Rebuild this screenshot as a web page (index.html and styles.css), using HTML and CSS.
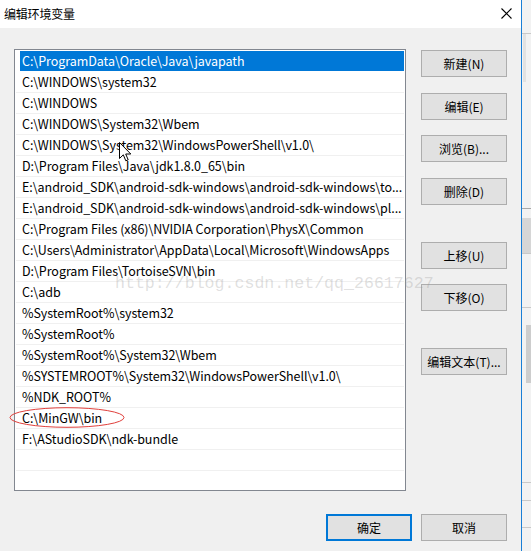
FILE: index.html
```html
<!DOCTYPE html>
<html lang="zh-CN">
<head>
<meta charset="utf-8">
<title>编辑环境变量</title>
<link rel="stylesheet" href="styles.css">
</head>
<body>
<div class="screen">
  <div class="dialog">
    <div class="titlebar">
      <span class="title">编辑环境变量</span>
      <svg class="close" width="11" height="11" viewBox="0 0 11 11"><path d="M0.5 0.5 L10.5 10.5 M10.5 0.5 L0.5 10.5" stroke="#000" stroke-width="1.1" fill="none"/></svg>
    </div>
    <div class="body">
      <div class="main">
        <div class="list">
          <div class="row selected"><span>C:\ProgramData\Oracle\Java\javapath</span></div>
          <div class="row"><span>C:\WINDOWS\system32</span></div>
          <div class="row"><span>C:\WINDOWS</span></div>
          <div class="row"><span>C:\WINDOWS\System32\Wbem</span></div>
          <div class="row"><span>C:\WINDOWS\System32\WindowsPowerShell\v1.0\</span></div>
          <div class="row"><span>D:\Program Files\Java\jdk1.8.0_65\bin</span></div>
          <div class="row"><span>E:\android_SDK\android-sdk-windows\android-sdk-windows\to...</span></div>
          <div class="row"><span>E:\android_SDK\android-sdk-windows\android-sdk-windows\pl...</span></div>
          <div class="row"><span>C:\Program Files (x86)\NVIDIA Corporation\PhysX\Common</span></div>
          <div class="row"><span>C:\Users\Administrator\AppData\Local\Microsoft\WindowsApps</span></div>
          <div class="row"><span>D:\Program Files\TortoiseSVN\bin</span></div>
          <div class="row"><span>C:\adb</span></div>
          <div class="row"><span>%SystemRoot%\system32</span></div>
          <div class="row"><span>%SystemRoot%</span></div>
          <div class="row"><span>%SystemRoot%\System32\Wbem</span></div>
          <div class="row"><span>%SYSTEMROOT%\System32\WindowsPowerShell\v1.0\</span></div>
          <div class="row"><span>%NDK_ROOT%</span></div>
          <div class="row"><span>C:\MinGW\bin</span></div>
          <div class="row"><span>F:\AStudioSDK\ndk-bundle</span></div>
          <div class="row"><span></span></div>
          <div class="row"><span></span></div>
        </div>
        <div class="buttons">
          <button class="btn first">新建(N)</button>
          <button class="btn wide">编辑(E)</button>
          <button class="btn">浏览(B)...</button>
          <button class="btn wide">删除(D)</button>
          <button class="btn group">上移(U)</button>
          <button class="btn">下移(O)</button>
          <button class="btn group">编辑文本(T)...</button>
        </div>
      </div>
      <div class="footer">
        <button class="btn default">确定</button>
        <button class="btn">取消</button>
      </div>
    </div>
    <div class="watermark">http://blog.csdn.net/qq_26617627</div>
    <svg class="ellipse" width="118" height="23" viewBox="0 0 118 23"><ellipse cx="59" cy="11.5" rx="57" ry="9.8" fill="none" stroke="#e0403c" stroke-width="1"/></svg>
    <svg class="cursor" width="13" height="21" viewBox="0 0 13 21"><path d="M0.5 0.5 L0.5 16.5 L4.3 12.8 L6.8 18.8 L9.2 17.8 L6.7 12 L11.8 12 Z" fill="#fff" stroke="#000" stroke-width="1" stroke-linejoin="miter"/></svg>
  </div>
  <div class="backdrop">
    <div class="bd-line l1"></div>
    <div class="bd-strip s1"></div>
    <div class="bd-line l2"></div>
    <div class="bd-block b1"></div>
    <div class="bd-line l3"></div>
    <div class="bd-line l4"></div>
    <div class="bd-thumb"></div>
    <div class="bd-line l5"></div>
    <div class="bd-line l6"></div>
    <div class="bd-line l7"></div>
  </div>
</div>
</body>
</html>
```
FILE: styles.css
```css
* { box-sizing: border-box; }
html, body { margin: 0; padding: 0; }
body {
  width: 531px;
  height: 551px;
  overflow: hidden;
  font-family: "Noto Sans CJK SC", "Noto Sans", sans-serif;
  background: #f0f0f0;
}
.screen {
  display: flex;
  height: 551px;
}
.dialog {
  position: relative;
  width: 522px;
  height: 551px;
  border-right: 1px solid #1a7fd6;
  background: #f0f0f0;
  display: flex;
  flex-direction: column;
}
.titlebar {
  height: 28px;
  background: #fff;
  display: flex;
  align-items: center;
  justify-content: space-between;
  padding: 0 9px 2px 4px;
}
.title {
  font-size: 12px;
  color: #000;
  letter-spacing: -0.2px;
}
.close { display: block; margin-top: 1px; }
.body {
  flex: 1;
  padding: 21px 14px 0 14px;
  display: flex;
  flex-direction: column;
}
.main {
  display: flex;
  gap: 15px;
}
.list {
  width: 392px;
  height: 442px;
  border: 1px solid #828790;
  background: #fff;
  padding: 1px 1px 0 1px;
  overflow: hidden;
}
.row {
  height: 21px;
  border-bottom: 1px solid #f0f0f0;
  padding-left: 6px;
  font-size: 12.5px;
  line-height: 20px;
  color: #000;
  white-space: nowrap;
  overflow: hidden;
  letter-spacing: -0.05px;
}
.row.selected {
  background: linear-gradient(to right, transparent 4px, #0078d7 4px);
  color: #fff;
  border-bottom-color: #fff;
}
.buttons {
  display: flex;
  flex-direction: column;
  gap: 15px;
  width: 86px;
}
.btn {
  width: 86px;
  height: 27px;
  background: #e1e1e1;
  border: 1px solid #adadad;
  padding: 0;
  font-family: "Noto Sans CJK SC", "Noto Sans", sans-serif;
  font-size: 12px;
  color: #000;
  line-height: 25px;
}
.btn.first { margin-top: 1px; }
.btn.wide { margin-top: 1px; }
.btn.group { margin-top: 22px; }
.footer {
  display: flex;
  justify-content: flex-end;
  gap: 9px;
  margin-top: 23px;
}
.btn.default {
  border: 2px solid #0078d7;
  line-height: 23px;
}
.watermark {
  position: absolute;
  left: 115px;
  top: 274px;
  font-family: "Liberation Mono", monospace;
  font-size: 16.6px;
  color: rgba(150, 150, 150, 0.3);
  white-space: nowrap;
  pointer-events: none;
}
.ellipse {
  position: absolute;
  left: 8px;
  top: 406px;
}
.cursor {
  position: absolute;
  left: 119px;
  top: 142px;
}
.backdrop {
  position: relative;
  flex: 1;
  background: #f2f2f2;
}
.bd-line {
  position: absolute;
  left: 0;
  right: 0;
  height: 1px;
  background: #c9c9c9;
}
.l1 { top: 33px; }
.l2 { top: 208px; background: #a8a8a8; }
.l3 { top: 253px; }
.l4 { top: 307px; }
.l5 { top: 482px; }
.l6 { top: 500px; }
.l7 { top: 527px; }
.bd-strip {
  position: absolute;
  left: 1px;
  width: 3px;
  top: 34px;
  height: 48px;
  background: #e2e2e2;
}
.bd-block {
  position: absolute;
  left: 0;
  right: 0;
  top: 218px;
  height: 35px;
  background: #d6d6d6;
}
.bd-thumb {
  position: absolute;
  left: 4px;
  right: 0;
  top: 325px;
  height: 58px;
  background: #cdcdcd;
}
```
